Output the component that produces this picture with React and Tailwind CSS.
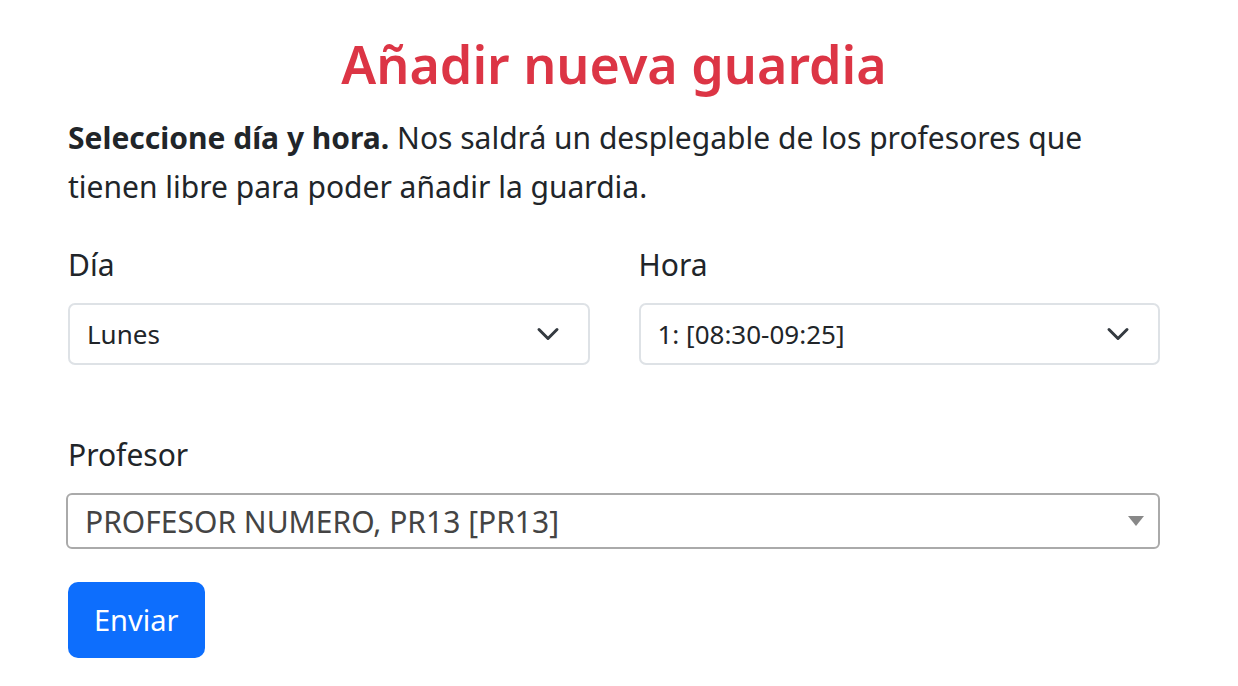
import React from "react";

function Chevron() {
  return (
    <svg width="24" height="24" viewBox="0 0 16 16" fill="none" className="shrink-0">
      <path d="M2 5l6 6 6-6" stroke="#343a40" strokeWidth="2" strokeLinecap="round" strokeLinejoin="round" />
    </svg>
  );
}

export default function App() {
  return (
    <div className="min-h-screen bg-white text-[#212529]">
      <div className="w-[1092px] ml-[68px] pt-[28px] font-['Noto_Sans',sans-serif]">
        <h1 className="text-center text-[#dc3545] text-[52px] font-semibold leading-[72px]">
          Añadir nueva guardia
        </h1>
        <p className="mt-[13px] text-[30px] leading-[49px] whitespace-nowrap">
          <strong className="font-bold">Seleccione día y hora.</strong> Nos saldrá un desplegable de los profesores que
          <br />
          tienen libre para poder añadir la guardia.
        </p>
        <div className="mt-[33px] grid grid-cols-2 gap-x-[49px]">
          <div>
            <label className="block text-[30px] leading-[42px]">Día</label>
            <div className="mt-[17px] h-[62px] border-2 border-[#dee2e6] rounded-[7px] flex items-center justify-between pl-[17px] pr-[28px]">
              <span className="text-[26px]">Lunes</span>
              <Chevron />
            </div>
          </div>
          <div>
            <label className="block text-[30px] leading-[42px]">Hora</label>
            <div className="mt-[17px] h-[62px] border-2 border-[#dee2e6] rounded-[7px] flex items-center justify-between pl-[17px] pr-[28px]">
              <span className="text-[26px]">1: [08:30-09:25]</span>
              <Chevron />
            </div>
          </div>
        </div>
        <div className="mt-[69px]">
          <label className="block text-[30px] leading-[42px]">Profesor</label>
          <div className="mt-[17px] ml-[-2px] h-[56px] border-2 border-[#aaaaaa] rounded-[6px] flex items-center justify-between pl-[17px] pr-[14px]">
            <span className="text-[30px] text-[#444444]">PROFESOR NUMERO, PR13 [PR13]</span>
            <svg width="16" height="10" viewBox="0 0 16 10">
              <path d="M0 0h16L8 10z" fill="#888888" />
            </svg>
          </div>
        </div>
        <button className="mt-[33px] h-[76px] px-[26px] rounded-[10px] bg-[#0d6efd] text-white text-[29px]">
          Enviar
        </button>
      </div>
    </div>
  );
}
